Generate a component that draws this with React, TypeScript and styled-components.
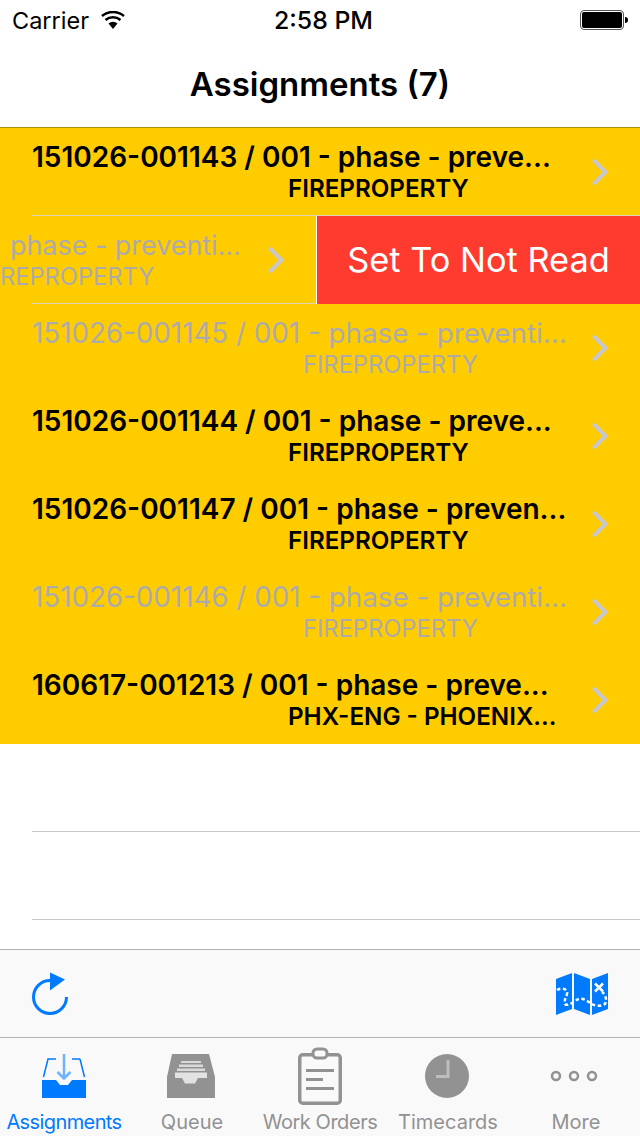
import React from "react";
import styled, { createGlobalStyle } from "styled-components";

const Global = createGlobalStyle`
  html, body { margin: 0; padding: 0; background: #fff; }
  body { font-family: "Inter", "Liberation Sans", sans-serif; }
`;

const Screen = styled.div`
  width: 640px; height: 1136px; display: flex; flex-direction: column; overflow: hidden; background: #fff;
`;
const StatusBar = styled.div`
  height: 40px; display: flex; align-items: center; justify-content: space-between; padding: 0 12px; font-size: 23.500px; color: #000; position: relative;
`;
const Carrier = styled.div`display: flex; align-items: center; gap: 11px;`;
const Clock = styled.div`position: absolute; left: 7px; right: 0; text-align: center; font-size: 24.800px; font-weight: 500;`;
const NavBar = styled.div`
  height: 88px; display: flex; align-items: center; justify-content: center; font-size: 33px; font-weight: 600; border-bottom: 1px solid #b09000; box-sizing: border-box;
`;
const Row = styled.div<{ $sepEnd?: number }>`
  height: 88px; background: #fc0; display: flex; align-items: center; position: relative; overflow: hidden; flex-shrink: 0;
  ${p => p.$sepEnd !== undefined && `&::after { content: ""; position: absolute; left: 32px; right: ${p.$sepEnd}px; bottom: 0; height: 1px; background: #dcd5b4; }`}
`;
const Texts = styled.div<{ $dim?: boolean }>`
  flex: 1; min-width: 0; padding-left: 32px; color: ${p => (p.$dim ? "#adabaa" : "#000")};
  font-weight: ${p => (p.$dim ? 400 : 600)};
`;
const Title = styled.div<{ $size: number }>`
  font-size: ${p => p.$size}px; line-height: 32px; margin-bottom: 2px; white-space: nowrap;
`;
const Sub = styled.div<{ $dim?: boolean }>`
  font-size: ${p => (p.$dim ? 23.7 : 24.2)}px; line-height: 28px; white-space: nowrap; padding-left: ${p => (p.$dim ? 271 : 256)}px;
`;
const Chevron = styled.svg`width: 60px; height: 30px; flex-shrink: 0; margin-left: auto;`;
const Slid = styled.div`
  width: 316px; height: 88px; display: flex; align-items: center; overflow: hidden; color: #adabaa; flex-shrink: 0; position: relative;
`;
const SwipeText = styled.div`
  width: 256px; flex-shrink: 0; padding-left: 10px; box-sizing: border-box;
`;
const SwipeSub = styled.div`
  font-size: 23.700px; line-height: 28px; white-space: nowrap; margin-left: -10px;
`;
const Action = styled.div`
  flex: 1; height: 88px; background: #ff3b30; color: #fff; font-size: 34.400px; padding-bottom: 2px; box-sizing: border-box; display: flex; align-items: center; justify-content: center; border-left: 1px solid #fff;
`;
const Empty = styled.div`flex: 1; display: flex; flex-direction: column;`;
const Line = styled.div`height: 88px; margin-left: 32px; border-bottom: 1px solid #c8c7cc; box-sizing: border-box; flex-shrink: 0;`;
const Toolbar = styled.div`
  height: 88px; background: #f9f9f9; border-top: 1px solid #b2b2b2; box-sizing: border-box; display: flex; align-items: center; justify-content: space-between; padding: 0 32px;
`;
const TabBar = styled.div`
  height: 99px; background: #f9f9f9; border-top: 1px solid #b2b2b2; box-sizing: border-box; display: grid; grid-template-columns: repeat(5, 128px);
`;
const Tab = styled.div<{ $on?: boolean; $track?: number }>`
  display: flex; flex-direction: column; align-items: center; padding-top: 9px; font-size: 20px; line-height: 26px;
  letter-spacing: ${p => p.$track ?? 0}px; color: ${p => (p.$on ? "#007aff" : "#929292")};
`;
const TabIcon = styled.svg`width: 60px; height: 58px; margin-bottom: 4px; flex-shrink: 0;`;

const Arrow = () => (
  <Chevron viewBox="0 0 60 30"><path d="M13.500 3l12 12-12 12" fill="none" stroke="#c7c7cc" strokeWidth="4" /></Chevron>
);
const rows = [
  ["151026-001143 / 001 - phase - preve...", "FIREPROPERTY", false],
  null,
  ["151026-001145 / 001 - phase - preventi...", "FIREPROPERTY", true],
  ["151026-001144 / 001 - phase - preve...", "FIREPROPERTY", false],
  ["151026-001147 / 001 - phase - preven...", "FIREPROPERTY", false],
  ["151026-001146 / 001 - phase - preventi...", "FIREPROPERTY", true],
  ["160617-001213 / 001 - phase - preve...", "PHX-ENG - PHOENIX...", false],
] as const;

export default function App() {
  return (
    <Screen>
      <Global />
      <StatusBar>
        <Carrier>Carrier
          <svg width="26" height="18" viewBox="0 0 26 18">
            <path d="M13 18l-4.500-5.500a7 7 0 0 1 9 0z" fill="#000" />
            <path d="M5.500 9a11.500 11.500 0 0 1 15 0M2 5a17 17 0 0 1 22 0" fill="none" stroke="#000" strokeWidth="2.500" />
          </svg>
        </Carrier>
        <Clock>2:58 PM</Clock>
        <svg width="48" height="20" viewBox="0 0 48 20">
          <rect x="0.500" y="0.500" width="43" height="19" rx="3.500" fill="#fff" stroke="#555" />
          <rect x="2" y="2" width="40" height="16" rx="2" fill="#000" />
          <path d="M45 7a3 3 0 0 1 0 6z" fill="#000" />
        </svg>
      </StatusBar>
      <NavBar>Assignments (7)</NavBar>
      {rows.map((r, i) =>
        r ? (
          <Row key={i} $sepEnd={i === 0 ? 0 : undefined}>
            <Texts $dim={r[2]}>
              <Title $size={r[2] ? 27.75 : 28}>{r[0]}</Title>
              <Sub $dim={r[2]}>{r[1]}</Sub>
            </Texts>
            <Arrow />
          </Row>
        ) : (
          <Row key={i} $sepEnd={324}>
            <Slid>
              <SwipeText>
                <Title $size={26.9}>phase - preventi...</Title>
                <SwipeSub>REPROPERTY</SwipeSub>
              </SwipeText>
              <Arrow />
            </Slid>
            <Action>Set To Not Read</Action>
          </Row>
        )
      )}
      <Empty><Line /><Line /></Empty>
      <Toolbar>
        <svg width="36" height="44" viewBox="0 0 36 44">
          <path d="M18 8.500A16.500 16.500 0 1 0 34.500 25" fill="none" stroke="#007aff" strokeWidth="3" />
          <path d="M18 .5L33 7.500 18 18.500z" fill="#007aff" />
        </svg>
        <svg width="52" height="42" viewBox="0 0 52 42">
          <path d="M0 6L16 0V36L0 42zM18 0L34 6V42L18 36zM36 6L52 0V36L36 42z" fill="#007aff" />
          <path d="M1 17C6 14 12 16 11 21C10 25 8 26 9 31C11 33 15 31 19 28C24 24 28 26 33 29C37 33 44 34 49 31C51 27 50 22 46 19" fill="none" stroke="#fff" strokeWidth="2.500" strokeDasharray="3.500 2.500" />
          <path d="M39 10.500l8 8M47 10.500l-8 8" stroke="#fff" strokeWidth="2.500" />
        </svg>
      </Toolbar>
      <TabBar>
        <Tab $on $track={-0.6}>
          <TabIcon viewBox="0 0 60 58">
            <g transform="translate(8 7)">
              <path d="M1.500 23L6 5h8M38 5h-8M38 5l4.500 18" fill="none" stroke="#007aff" strokeWidth="1.500" />
              <path d="M22 0V24M15.500 18L22 24.500 28.500 18" fill="none" stroke="#6fb3ff" strokeWidth="2.500" />
              <path d="M0 26H14L18 31H26L30 26H44V44H0z" fill="#007aff" />
            </g>
          </TabIcon>
          Assignments
        </Tab>
        <Tab>
          <TabIcon viewBox="0 0 60 58">
            <g transform="translate(5 7)">
              <path d="M5 0H42L48 23V44H0V23z" fill="#929292" />
              <path d="M14 7H34V9H14zM12 10.500H36V13H12zM10 14.500H38V17H10z" fill="#d9d9d9" />
              <path d="M8 18.500H40V24H31L28 29.500H18L15 24H8z" fill="#e2e2e2" />
            </g>
          </TabIcon>
          Queue
        </Tab>
        <Tab $track={-0.45}>
          <TabIcon viewBox="0 0 60 58">
            <rect x="9.750" y="7.750" width="40.500" height="48.500" rx="3" fill="none" stroke="#929292" strokeWidth="3.500" />
            <rect x="23" y="2" width="14" height="9" rx="4" fill="#f9f9f9" stroke="#929292" strokeWidth="3" />
            <path d="M16 23.500H44M16 32.500H33M16 41.500H44" stroke="#929292" strokeWidth="3" />
          </TabIcon>
          Work Orders
        </Tab>
        <Tab>
          <TabIcon viewBox="0 0 60 58">
            <circle cx="29" cy="29" r="22" fill="#929292" />
            <path d="M30 13V29.500H18" fill="none" stroke="#bdbdbd" strokeWidth="3" />
          </TabIcon>
          Timecards
        </Tab>
        <Tab>
          <TabIcon viewBox="0 0 60 58">
            <g fill="none" stroke="#929292" strokeWidth="2.500">
              <circle cx="10" cy="29" r="4" />
              <circle cx="28" cy="29" r="4" />
              <circle cx="46" cy="29" r="4" />
            </g>
          </TabIcon>
          More
        </Tab>
      </TabBar>
    </Screen>
  );
}
